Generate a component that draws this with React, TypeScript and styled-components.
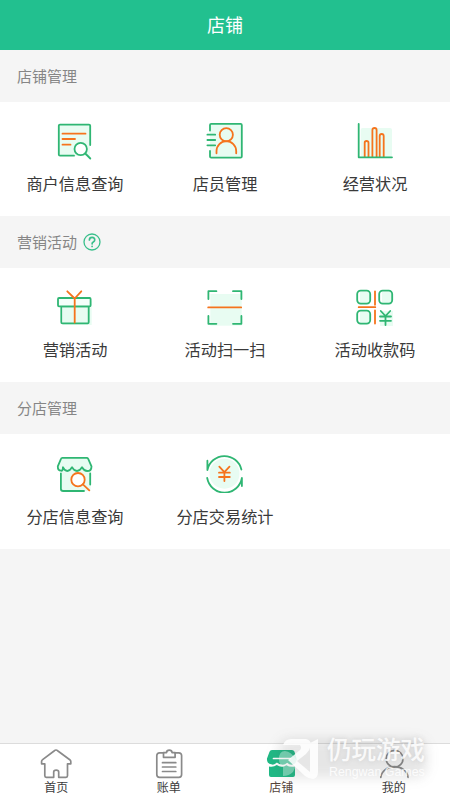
import React from "react";
import styled, { createGlobalStyle } from "styled-components";

const GREEN = "#2fb673";
const ORANGE = "#f5741d";
const MINT = "#e8fcf2";
const GREY = "#8a8a8a";

const GlobalStyle = createGlobalStyle`
  * { box-sizing: border-box; }
  body { margin: 0; background: #f5f5f5; font-family: "Noto Sans CJK SC", "Noto Sans", sans-serif; }
`;

const Page = styled.div`
  position: relative;
  display: flex;
  flex-direction: column;
  width: 450px;
  height: 800px;
  overflow: hidden;
  background: #f5f5f5;
`;

const Header = styled.header`
  height: 50px;
  flex: none;
  display: flex;
  align-items: center;
  justify-content: center;
  padding-bottom: 2px;
  background: #22c08f;
  color: #fff;
  font-size: 18px;
`;

const Main = styled.main`
  flex: 1;
`;

const SectionTitle = styled.h2`
  display: flex;
  align-items: center;
  gap: 6px;
  height: 52px;
  margin: 0;
  padding: 0 17px 1px;
  color: #868686;
  font-size: 15px;
  font-weight: 400;
`;

const Card = styled.div`
  display: grid;
  grid-template-columns: repeat(3, 1fr);
  height: 114.2px;
  background: #fff;
`;

const Entry = styled.div`
  display: flex;
  flex-direction: column;
  align-items: center;
  padding-top: 19px;
`;

const EntryLabel = styled.span`
  margin-top: 10.3px;
  color: #3a3a3a;
  font-size: 16.2px;
  line-height: 24px;
  white-space: nowrap;
`;

const EntryIcon = styled.svg`
  width: 40px;
  height: 40px;
  fill: none;
  stroke: ${GREEN};
  stroke-width: 1.8;
  stroke-linecap: round;
  stroke-linejoin: round;

  .accent { stroke: ${ORANGE}; }
  .tint { fill: ${MINT}; stroke: none; }
`;

const HelpIcon = styled.svg`
  width: 18px;
  height: 18px;
  fill: none;
  stroke: #39bf8b;
  stroke-linecap: round;
`;

const TabBar = styled.nav`
  display: grid;
  grid-template-columns: repeat(4, 1fr);
  height: 57px;
  flex: none;
  border-top: 1px solid #dcdcdc;
  background: #fff;
`;

const Tab = styled.div<{ $active?: boolean }>`
  display: flex;
  flex-direction: column;
  align-items: center;
  padding-top: 4px;
  color: ${(p) => (p.$active ? "#55443c" : "#3c3c3c")};
  font-size: 12px;
  line-height: 14px;
`;

const TabIcon = styled.svg`
  width: 36px;
  height: 32px;
  fill: none;
  stroke: ${GREY};
  stroke-width: 1.7;
  stroke-linecap: round;
  stroke-linejoin: round;
`;

const Watermark = styled.div`
  position: absolute;
  left: 274px;
  top: 735px;
  display: flex;
  gap: 6px;
  color: rgba(255, 255, 255, 0.86);
  pointer-events: none;

  &::before {
    content: "";
    position: absolute;
    inset: 4px -2px 2px 4px;
    border-radius: 12px;
    background: rgba(80, 80, 80, 0.14);
    filter: blur(6px);
  }
`;

const WatermarkLogo = styled.svg`
  position: relative;
  width: 47px;
  height: 44px;
  margin-top: 1px;
  overflow: visible;
`;

const WatermarkText = styled.div`
  position: relative;
  display: flex;
  flex-direction: column;
  white-space: nowrap;
`;

const WatermarkName = styled.span`
  font-size: 24.5px;
  font-weight: 500;
  line-height: 28px;
  text-shadow: 0 0 5px rgba(90, 90, 90, 0.16);
`;

const WatermarkLatin = styled.span`
  margin-top: 1px;
  padding-left: 2px;
  font-family: "Liberation Sans", sans-serif;
  font-size: 12.4px;
  line-height: 16px;
`;

const drawings = {
  merchant: (
    <>
      <path className="tint" d="M4 4h31v31H4z" />
      <path d="M19 34.7H5q-1.2 0-1.2-1.2V4.8q0-1.2 1.2-1.2h29q1.2 0 1.2 1.2V24" />
      <path className="accent" d="M7.5 12.7H30.5M7.5 18H20M7.5 23.7H15.5" />
      <circle cx="25.7" cy="28" r="6.2" fill="#fff" />
      <path d="m30.3 32.5 5 5" />
    </>
  ),
  staff: (
    <>
      <path className="tint" d="M5 3h32v34H5z" />
      <path d="M5 9.5V4q0-1.2 1.2-1.2h29.4q1.2 0 1.2 1.2v31.5q0 1.2-1.2 1.2H6.2Q5 36.7 5 35.5V30M2.4 13.7h7.8M2.4 19h7.8M2.4 24.3h7.8" />
      <circle className="accent" cx="21.3" cy="13.7" r="6.6" />
      <path className="accent" d="M11.5 32.3V30a9.8 9.8 0 0 1 19.7 0v2.3" />
    </>
  ),
  chart: (
    <>
      <rect className="tint" x="5.7" y="7" width="31.3" height="29" rx="2" />
      <path className="accent" d="M9.7 36V21.8q0-1.8 1.9-1.8t1.9 1.8V36M17.4 36V9q0-2 2.1-2t2.1 2v27M24.7 36V15q0-2 2-2t2 2v21" />
      <path d="M3.7 3v33.3H37" />
    </>
  ),
  gift: (
    <>
      <path className="tint" d="M8 14h28.7v24H8z" />
      <rect x="6.3" y="19.3" width="27.4" height="17" rx="1" />
      <rect x="3" y="11" width="32.6" height="8.3" rx="1" fill="#f4fffa" />
      <path className="accent" d="m12.3 4.3 7.4 7.2 6.6-7.2M19.7 11.5v24" />
    </>
  ),
  scan: (
    <>
      <rect className="tint" x="5.3" y="7" width="31.4" height="31.7" />
      <path d="M3.4 12V4.2h8M28 4.2h8.4V12M3.4 29v7.8h8M28 36.8h8.4V29" />
      <path className="accent" d="M3.2 20.4h33" />
    </>
  ),
  qr: (
    <>
      <path className="tint" d="M5 5h10v12H5zM27 5h10v12H27zM5 25h10v12H5zM25 24h13v15H25z" />
      <rect x="2.2" y="3.6" width="13" height="13" rx="3.5" />
      <rect x="24.2" y="3.6" width="13" height="13" rx="3.5" />
      <rect x="2.2" y="23.6" width="13" height="13" rx="3.5" />
      <path className="accent" d="M20 4.3v13.5M20 23.5v13M3.7 20.2h16.6" />
      <path d="m25.8 24 4.7 5 4.7-5M30.5 29v9M25 29.5h11M25 33.8h11" />
    </>
  ),
  branch: (
    <>
      <path className="tint" d="M7.5 5h24l5 10-1 23H6V17l-3-2z" />
      <path d="M7.2 4.8h24.500q1 0 1.500 1l3.300 7.600q0 4.600-4.300 4.600-3 0-5.200-3.800-2 3.800-5 3.800t-5-3.800q-2 3.800-4.700 3.800t-4.400-3.800Q8 18 6 17.700q-3.300-.4-3.200-4.300L6 5.800q.3-1 1.200-1M5.900 20.500v15.200q0 2.300 2.300 2.300H29M35.200 20.500v11" />
      <circle className="accent" cx="23" cy="26.7" r="6.7" fill="#fff" />
      <path className="accent" d="m27.9 31.4 6.4 6" />
    </>
  ),
  trade: (
    <>
      <circle className="tint" cx="19.5" cy="20.7" r="15" />
      <path d="M2.4 7.7V17a17.4 17.4 0 0 1 34-.5M36.9 33v-8a17.6 17.6 0 0 1-34.7 0" />
      <path className="accent" d="m14.3 13.6 5.1 5.5 5.1-5.5M19.4 19.1v9M14 19.7h10.8M14 24h10.8" />
    </>
  ),
};

type DrawingName = keyof typeof drawings;

interface Section {
  title: string;
  help?: boolean;
  entries: { icon: DrawingName; label: string }[];
}

const sections: Section[] = [
  {
    title: "店铺管理",
    entries: [
      { icon: "merchant", label: "商户信息查询" },
      { icon: "staff", label: "店员管理" },
      { icon: "chart", label: "经营状况" },
    ],
  },
  {
    title: "营销活动",
    help: true,
    entries: [
      { icon: "gift", label: "营销活动" },
      { icon: "scan", label: "活动扫一扫" },
      { icon: "qr", label: "活动收款码" },
    ],
  },
  {
    title: "分店管理",
    entries: [
      { icon: "branch", label: "分店信息查询" },
      { icon: "trade", label: "分店交易统计" },
    ],
  },
];

const tabs = [
  {
    label: "首页",
    drawing: (
      <path d="M18 2q.8 0 1.6.7l12.2 9q1.2 1 1 2.6v1.5h-3.3v12q0 1.5-1.5 1.5h-7.3v-5.2q0-2-2.5-2t-2.5 2v5.2H8.3q-1.5 0-1.5-1.5v-12H3.6v-1.5q-.3-1.6 1-2.6l11.8-9Q17.2 2 18 2z" />
    ),
  },
  {
    label: "账单",
    drawing: (
      <>
        <path d="M12.5 4.8H8.6q-2.8 0-2.8 2.8v19q0 2.8 2.8 2.8h19.2q2.8 0 2.8-2.8v-19q0-2.8-2.8-2.8H24" />
        <path d="M12.5 9.3V4.6h3q.2-2.5 2.8-2.5t2.8 2.5h3v4.7zM11.5 14.7h13.3M11.5 19h13.3M11.5 23.5h13.3" />
      </>
    ),
  },
  {
    label: "店铺",
    active: true,
    drawing: (
      <g stroke="none" fill="#20b985">
        <path d="M9 2h20q1.8 0 2.4 1.6l2 6.4q1 6-4 6.6-3 .3-5.2-1.8-2.7 2.4-5.5 1.8-2.5 0-4.8-2-2.2 2.3-4.7 2Q3.5 16 4 10.5L6.5 3.7Q7 2 9 2z" />
        <path d="M6 18.5q4.5 1 7.8-1.5 4.5 3.300 9.600.2 3.500 2.300 8.600 1.300V27q0 2-2 2H8q-2 0-2-2z" />
        <path d="M10.5 10.5h17" stroke="#fff" />
      </g>
    ),
  },
  {
    label: "我的",
    drawing: (
      <>
        <circle cx="18.6" cy="10.7" r="8.4" />
        <path d="M4.8 29.3C5.5 23 11.5 18.7 18.5 18.7S31.5 23 32 29.3" />
      </>
    ),
  },
];

export default function App() {
  return (
    <>
      <GlobalStyle />
      <Page>
        <Header>店铺</Header>
        <Main>
          {sections.map((section) => (
            <section key={section.title}>
              <SectionTitle>
                {section.title}
                {section.help && (
                  <HelpIcon viewBox="0 0 18 18">
                    <circle cx="9" cy="9" r="8" strokeWidth="1.3" />
                    <path d="M6.4 7q0-2.6 2.7-2.6T11.7 7q0 1.2-1.4 2T9.1 10.8M9.1 13.3v.1" strokeWidth="1.7" />
                  </HelpIcon>
                )}
              </SectionTitle>
              <Card>
                {section.entries.map((entry) => (
                  <Entry key={entry.label}>
                    <EntryIcon viewBox="0 0 40 40">{drawings[entry.icon]}</EntryIcon>
                    <EntryLabel>{entry.label}</EntryLabel>
                  </Entry>
                ))}
              </Card>
            </section>
          ))}
        </Main>
        <TabBar>
          {tabs.map((tab) => (
            <Tab key={tab.label} $active={tab.active}>
              <TabIcon viewBox="0 0 36 32">{tab.drawing}</TabIcon>
              {tab.label}
            </Tab>
          ))}
        </TabBar>
        <Watermark>
          <WatermarkLogo viewBox="0 0 47 44">
            <g fill="#fff" fillOpacity=".85">
              <path d="M9 9q2-6 8-6h15q5 1 5 6-1 5-5 9l-9 7 13 11V7l8-4v33q0 6-5 7-4 0-8-3L14 24l12-10q2-2 0-5z" />
              <path d="M5 23q0-8 6-8t12 10q-1 6-4 11-4 4-10 4v-9q-4-2-4-8z" fillOpacity=".35" />
            </g>
          </WatermarkLogo>
          <WatermarkText>
            <WatermarkName>仍玩游戏</WatermarkName>
            <WatermarkLatin>Rengwan Games</WatermarkLatin>
          </WatermarkText>
        </Watermark>
      </Page>
    </>
  );
}
